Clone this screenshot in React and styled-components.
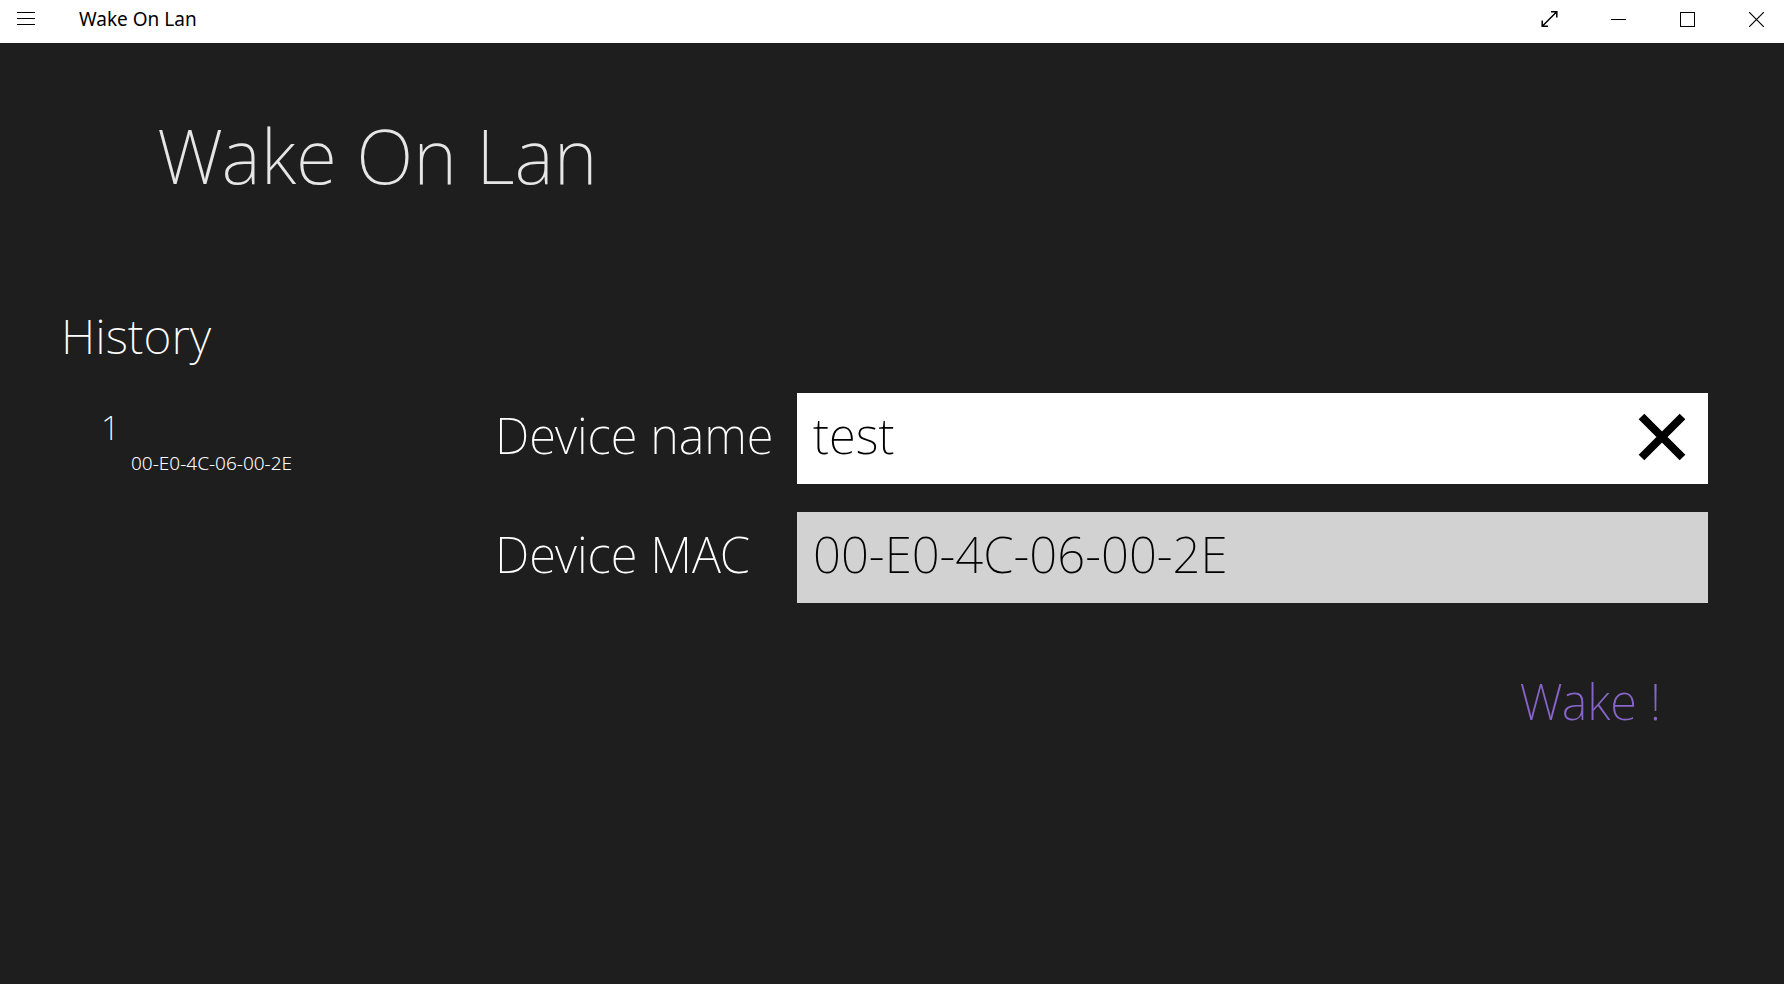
import React, { useState } from 'react';
import styled, { createGlobalStyle } from 'styled-components';

const GlobalStyle = createGlobalStyle`
  *, *::before, *::after { box-sizing: border-box; }
  body {
    margin: 0;
    background: #1e1e1e;
    color: #fff;
    font-family: "Noto Sans", "Open Sans", sans-serif;
    font-weight: 200;
  }
  button, input { font: inherit; color: inherit; border: 0; border-radius: 0; padding: 0; }
  button { background: none; cursor: pointer; }
`;

const Window = styled.div`
  min-height: 100vh;
  display: flex;
  flex-direction: column;
`;

const TitleBar = styled.header`
  height: 43px;
  display: flex;
  align-items: center;
  background: #fff;
  color: #000;
  padding-bottom: 4px;
`;

const BarButton = styled.button`
  width: ${(p) => p.$width || 55}px;
  height: 39px;
  display: flex;
  align-items: center;
  justify-content: center;
`;

const WindowName = styled.span`
  flex: 1;
  padding: 0 0 2px 27px;
  font-size: 19px;
  line-height: 26px;
  font-weight: 400;
`;

const WindowControls = styled.div`
  display: flex;
  gap: 14px;
`;

const BarIcon = styled.svg`
  display: block;
  fill: none;
  stroke: #000;
`;

const Main = styled.main`
  flex: 1;
  padding: 61px 76px 40px 61px;
`;

const PageTitle = styled.h1`
  margin: 0 0 97px;
  padding-left: 96px;
  font-size: 75px;
  line-height: 102px;
  font-weight: 200;
  color: #e6e6e6;
`;

const Columns = styled.div`
  display: grid;
  grid-template-columns: 434px minmax(0, 1fr);
`;

const HistoryTitle = styled.h2`
  margin: 0 0 37px;
  font-size: 48px;
  line-height: 66px;
  font-weight: 200;
`;

const HistoryList = styled.ul`
  list-style: none;
  margin: 0;
  padding: 0 0 0 40px;
`;

const HistoryName = styled.div`
  font-size: 33px;
  line-height: 44px;
`;

const HistoryMac = styled.div`
  padding-left: 30px;
  font-size: 19px;
  line-height: 26px;
  font-weight: 300;
`;

const Form = styled.form`
  padding-top: 90px;
  display: flex;
  flex-direction: column;
  gap: 28px;
`;

const Row = styled.div`
  display: grid;
  grid-template-columns: 302px minmax(0, 1fr);
`;

const Label = styled.label`
  height: 91px;
  padding-bottom: 7px;
  display: flex;
  align-items: center;
  font-size: 49px;
  line-height: 66px;
  white-space: nowrap;
`;

const Field = styled.div`
  height: 91px;
  display: flex;
  background: ${(p) => (p.$focused ? '#fff' : '#d2d2d2')};
  color: #000;
`;

const Input = styled.input`
  flex: 1;
  min-width: 0;
  padding: 0 0 7px 16px;
  background: transparent;
  outline: none;
  font-size: 49px;
`;

const ClearButton = styled.button`
  width: 93px;
  height: 91px;
  padding-bottom: 4px;
  display: flex;
  align-items: center;
  justify-content: center;
`;

const WakeButton = styled.button`
  align-self: flex-end;
  margin: 37px 47px 0 0;
  font-size: 49px;
  line-height: 66px;
  color: #8764c8;
`;

export default function App() {
  const [name, setName] = useState('test');
  const [mac, setMac] = useState('00-E0-4C-06-00-2E');

  return (
    <Window>
      <GlobalStyle />
      <TitleBar>
        <BarButton $width={52} aria-label="Menu">
          <BarIcon width="18" height="15" shapeRendering="crispEdges">
            <path d="M0 .5H18M0 6.5H18M0 12.5H18" />
          </BarIcon>
        </BarButton>
        <WindowName>Wake On Lan</WindowName>
        <WindowControls>
          <BarButton aria-label="Full screen">
            <BarIcon width="17" height="17" strokeWidth="1.5">
              <path d="M1.5 15L15.5 1M10 .8H15.8V6.5M1.2 9.5V15.2H7" />
            </BarIcon>
          </BarButton>
          <BarButton aria-label="Minimize">
            <BarIcon width="15" height="15" shapeRendering="crispEdges">
              <path d="M0 7.5H15" />
            </BarIcon>
          </BarButton>
          <BarButton aria-label="Maximize">
            <BarIcon width="15" height="15" shapeRendering="crispEdges">
              <path d="M.5 .5H14.5V14.5H.5Z" />
            </BarIcon>
          </BarButton>
          <BarButton aria-label="Close">
            <BarIcon width="15" height="15" strokeWidth="1.2">
              <path d="M0 0L15 15M15 0L0 15" />
            </BarIcon>
          </BarButton>
        </WindowControls>
      </TitleBar>
      <Main>
        <PageTitle>Wake On Lan</PageTitle>
        <Columns>
          <section>
            <HistoryTitle>History</HistoryTitle>
            <HistoryList>
              <li>
                <HistoryName>1</HistoryName>
                <HistoryMac>00-E0-4C-06-00-2E</HistoryMac>
              </li>
            </HistoryList>
          </section>
          <Form onSubmit={(e) => e.preventDefault()}>
            <Row>
              <Label htmlFor="device-name">Device name</Label>
              <Field $focused>
                <Input id="device-name" value={name} onChange={(e) => setName(e.target.value)} />
                <ClearButton type="button" aria-label="Clear" onClick={() => setName('')}>
                  <BarIcon width="48" height="48" strokeWidth="8">
                    <path d="M3.5 3.5L44.5 44.5M44.5 3.5L3.5 44.5" />
                  </BarIcon>
                </ClearButton>
              </Field>
            </Row>
            <Row>
              <Label htmlFor="device-mac">Device MAC</Label>
              <Field>
                <Input id="device-mac" value={mac} onChange={(e) => setMac(e.target.value)} />
              </Field>
            </Row>
            <WakeButton type="submit">Wake !</WakeButton>
          </Form>
        </Columns>
      </Main>
    </Window>
  );
}
